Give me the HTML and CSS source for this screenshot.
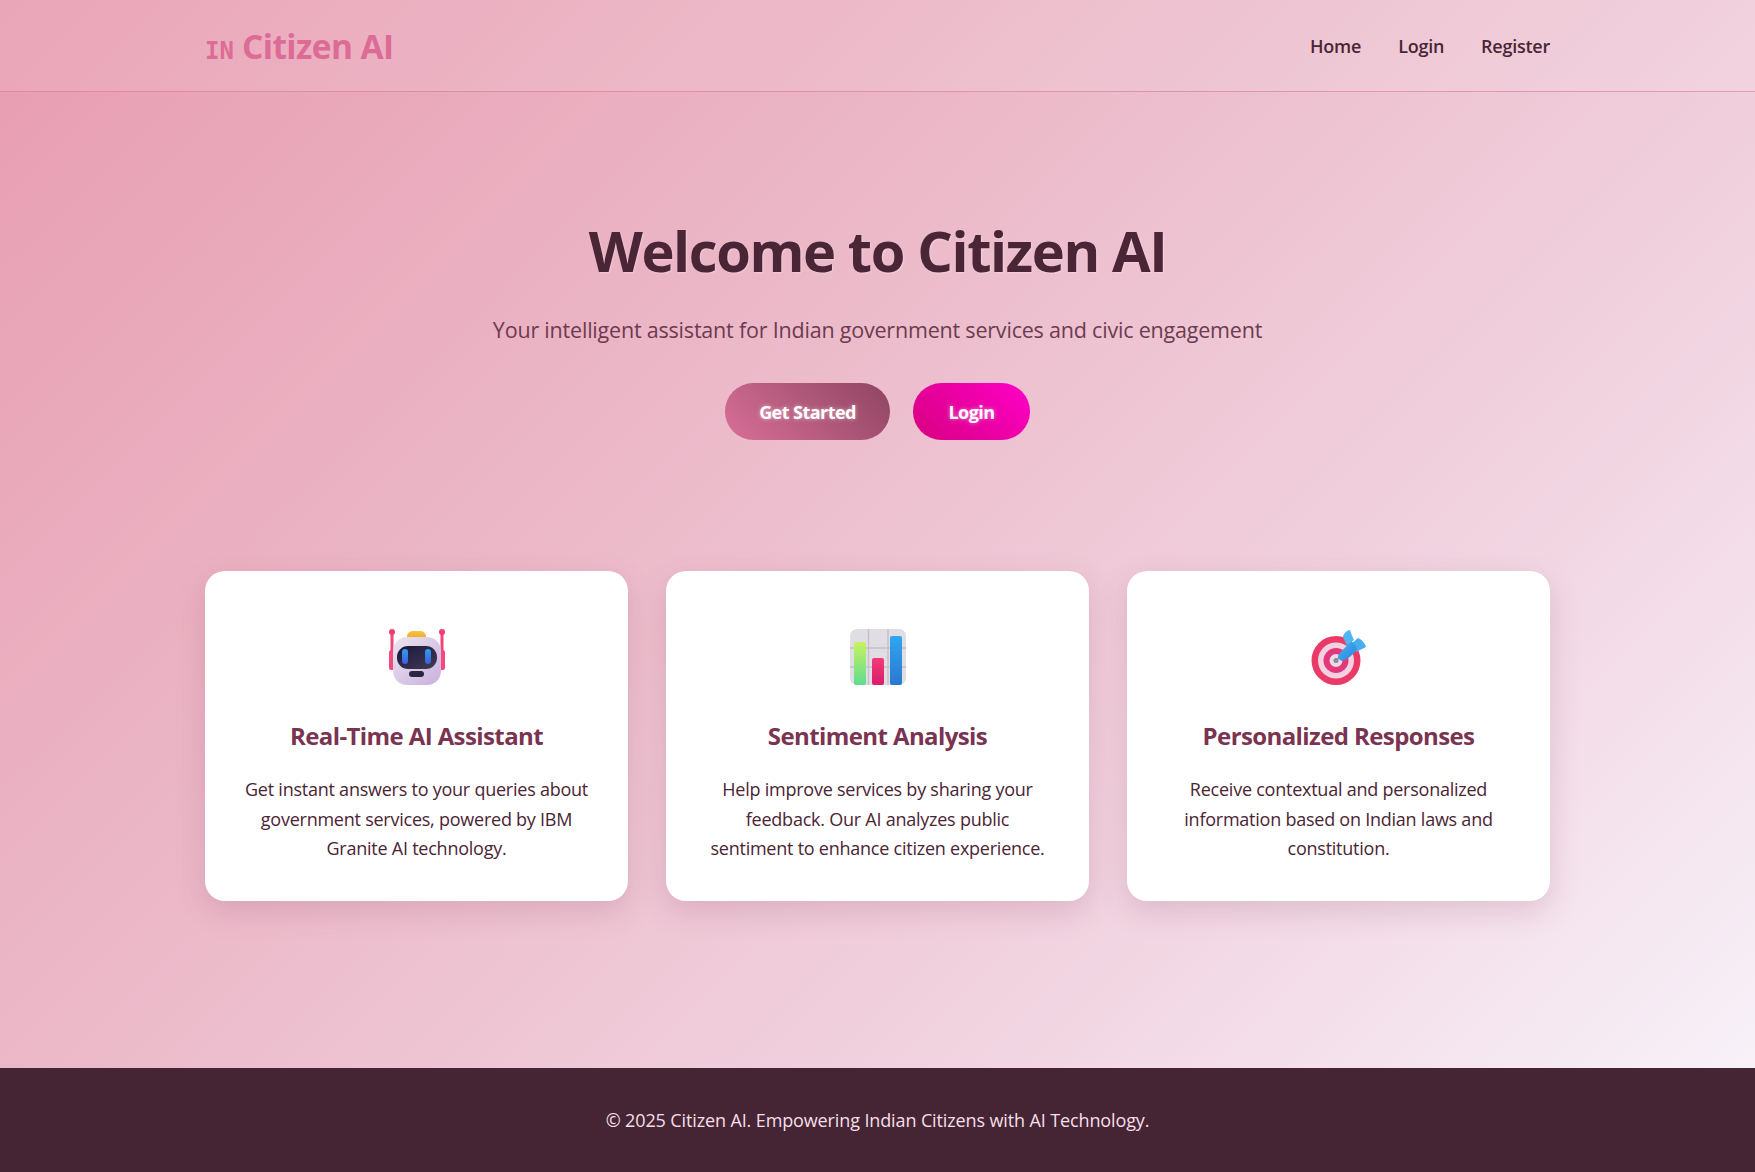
FILE: index.html
```html
<!DOCTYPE html>
<html lang="en">
<head>
<meta charset="utf-8">
<title>Citizen AI</title>
<link rel="stylesheet" href="styles.css">
</head>
<body>
<div class="page">
  <header class="topbar">
    <div class="wrap topbar-inner">
      <a class="logo"><span class="flag">IN</span> Citizen AI</a>
      <nav class="nav"><a>Home</a><a>Login</a><a>Register</a></nav>
    </div>
  </header>
  <main class="main">
    <section class="hero">
      <h1>Welcome to Citizen AI</h1>
      <p class="lead">Your intelligent assistant for Indian government services and civic engagement</p>
      <div class="actions">
        <a class="btn btn-rose">Get Started</a>
        <a class="btn btn-magenta">Login</a>
      </div>
    </section>
    <section class="wrap cards">
      <article class="card">
        <svg class="icon" viewBox="0 0 56 56">
          <defs>
            <linearGradient id="rb" x1="0" y1="0" x2="1" y2="1"><stop offset="0" stop-color="#ece6ef"/><stop offset="1" stop-color="#c9afdf"/></linearGradient>
            <linearGradient id="rs" x1="0" y1="0" x2="1" y2="1"><stop offset="0" stop-color="#17183a"/><stop offset="1" stop-color="#453a55"/></linearGradient>
            <linearGradient id="re" x1="0" y1="0" x2="0" y2="1"><stop offset="0" stop-color="#2f9df0"/><stop offset="1" stop-color="#3a5fd8"/></linearGradient>
            <linearGradient id="rh" x1="0" y1="0" x2="0" y2="1"><stop offset="0" stop-color="#f7c63e"/><stop offset="1" stop-color="#eea22a"/></linearGradient>
          </defs>
          <rect x="1.500" y="3" width="3" height="20" fill="#f0457a"/><rect x="51.500" y="3" width="3" height="20" fill="#f0457a"/>
          <circle cx="3" cy="3" r="3" fill="#ee3f72"/><circle cx="53" cy="3" r="3" fill="#ee3f72"/>
          <rect x="0" y="21" width="6" height="20" rx="2.500" fill="#f6477f"/><rect x="50" y="21" width="6" height="20" rx="2.500" fill="#f6477f"/>
          <path d="M18 8c0-4 3-6 6-6h7c3 0 6 2 6 6v3H18z" fill="url(#rh)"/>
          <rect x="4" y="8" width="48" height="48" rx="14" fill="url(#rb)"/>
          <rect x="8" y="17" width="40" height="23" rx="11" fill="url(#rs)"/>
          <rect x="13" y="20" width="6" height="15" rx="3" fill="url(#re)"/><rect x="36" y="20" width="6" height="15" rx="3" fill="url(#re)"/>
          <rect x="20" y="42" width="15" height="6" rx="3" fill="#2a2540"/>
        </svg>
        <h3>Real-Time AI Assistant</h3>
        <p>Get instant answers to your queries about government services, powered by IBM Granite AI technology.</p>
      </article>
      <article class="card">
        <svg class="icon" viewBox="0 0 56 56">
          <defs>
            <linearGradient id="bg" x1="0" y1="0" x2="0" y2="1"><stop offset="0" stop-color="#c8f25f"/><stop offset="1" stop-color="#60dc90"/></linearGradient>
            <linearGradient id="bp" x1="0" y1="0" x2="0" y2="1"><stop offset="0" stop-color="#f43a78"/><stop offset="1" stop-color="#d81e6b"/></linearGradient>
            <linearGradient id="bb" x1="0" y1="0" x2="0" y2="1"><stop offset="0" stop-color="#30a6f0"/><stop offset="1" stop-color="#2a78cf"/></linearGradient>
          </defs>
          <rect x="0" y="0" width="56" height="56" rx="7" fill="#e0dde4"/>
          <path d="M18.500 0v56M38 0v56M0 19h56M0 38h56" stroke="#c4c0c8" stroke-width="1.400"/>
          <rect x="4" y="13" width="12" height="43" rx="2" fill="url(#bg)"/>
          <rect x="22" y="29" width="12" height="27" rx="2" fill="url(#bp)"/>
          <rect x="40" y="7" width="12" height="49" rx="2" fill="url(#bb)"/>
        </svg>
        <h3>Sentiment Analysis</h3>
        <p>Help improve services by sharing your feedback. Our AI analyzes public sentiment to enhance citizen experience.</p>
      </article>
      <article class="card">
        <svg class="icon" viewBox="0 0 56 56">
          <defs>
            <linearGradient id="tb" x1="0" y1="0" x2="1" y2="1"><stop offset="0" stop-color="#3fb0f2"/><stop offset="1" stop-color="#2f86dc"/></linearGradient>
          </defs>
          <circle cx="25" cy="31.500" r="24.500" fill="#ea3a68"/>
          <circle cx="25" cy="31.500" r="18" fill="#f2d2e0"/>
          <circle cx="25" cy="31.500" r="12.500" fill="#e2387a"/>
          <circle cx="25" cy="31.500" r="6.500" fill="#ecdbe6"/>
          <circle cx="25" cy="31.500" r="2.500" fill="#8e8a94"/>
          <path d="M25 31.500L35 22" stroke="#7d8fae" stroke-width="1.400"/>
          <path d="M36 17L32 8c0-3 4-7 7-7 1 3 3 8 4 10z" fill="#4fb6f4"/>
          <path d="M40 15L47 9c3 1 7 5 8 9l-8 4-5 1z" fill="#46aef0"/>
          <path d="M27 27c3-5 9-11 14-14 3 2 4 4 5 7-3 5-9 10-15 12-3-1-4-3-4-5z" fill="url(#tb)"/>
        </svg>
        <h3>Personalized Responses</h3>
        <p>Receive contextual and personalized information based on Indian laws and constitution.</p>
      </article>
    </section>
  </main>
  <footer class="footer">© 2025 Citizen AI. Empowering Indian Citizens with AI Technology.</footer>
</div>
</body>
</html>
```
FILE: styles.css
```css
* { box-sizing: border-box; }
html, body { margin: 0; height: 100%; }
body {
  font-family: "Open Sans", "Noto Sans", "Liberation Sans", sans-serif;
  color: #4a2535;
  background: #fff;
}
.page {
  min-height: 1172px;
  display: flex;
  flex-direction: column;
  background: linear-gradient(135deg, #e89cb1 0%, #ebb6c6 35%, #f1d2df 70%, #f7f1f8 100%);
  background-size: 100% 1068px;
  background-repeat: no-repeat;
}
.wrap { width: 1345px; margin: 0 auto; }
.topbar {
  height: 92px;
  background: rgba(255, 255, 255, 0.1);
  border-bottom: 1px solid rgba(214, 110, 140, 0.55);
}
.topbar-inner {
  height: 100%;
  display: flex;
  align-items: center;
  justify-content: space-between;
}
.logo {
  font-size: 33.500px;
  font-weight: 700;
  color: #dc6c96;
  letter-spacing: -0.6px;
}
.flag { font-size: 24px; font-family: "DejaVu Sans Mono", monospace; letter-spacing: 0; }
.nav { display: flex; gap: 37px; }
.nav a { font-size: 18px; font-weight: 600; color: #4a2535; letter-spacing: -0.25px; }
.main { flex: 1; }
.hero { text-align: center; padding-top: 123px; }
.hero h1 {
  margin: 0;
  font-size: 56px;
  line-height: 70px;
  font-weight: 700;
  color: #4a2535;
  letter-spacing: -1.4px;
  text-shadow: 1px 1px 2px rgba(255, 255, 255, 0.3);
}
.lead {
  margin: 30px 0 0;
  font-size: 21.500px;
  line-height: 30px;
  font-weight: 400;
  color: #6d3b50;
  letter-spacing: -0.2px;
}
.actions { display: flex; justify-content: center; gap: 23px; margin-top: 38px; }
.btn {
  height: 57px;
  line-height: 58px;
  border-radius: 29px;
  font-size: 18px;
  font-weight: 700;
  color: #fff;
  text-align: center;
  letter-spacing: -0.55px;
  text-shadow: 0 0 4px rgba(255, 255, 255, 0.5);
}
.btn-rose { width: 165px; background: linear-gradient(45deg, #d96f98, #8e4560); }
.btn-magenta { width: 117px; background: linear-gradient(45deg, #d6007f, #ff00c8); }
.cards {
  display: grid;
  grid-template-columns: repeat(3, 423px);
  gap: 38px;
  margin-top: 131px;
}
.card {
  height: 330px;
  background: #fff;
  border-radius: 20px;
  box-shadow: 0 10px 30px rgba(140, 70, 100, 0.2);
  padding: 58px 38px 0;
  text-align: center;
}
.icon { display: block; width: 56px; height: 56px; margin: 0 auto; filter: blur(0.3px); overflow: visible; }
.card h3 {
  margin: 34px 0 0;
  font-size: 24px;
  line-height: 34px;
  font-weight: 700;
  color: #7a3350;
  letter-spacing: -0.6px;
}
.card p {
  margin: 22px 0 0;
  font-size: 18px;
  line-height: 29.600px;
  font-weight: 400;
  color: #4a2535;
  letter-spacing: -0.24px;
}
.footer {
  height: 104px;
  background: #452534;
  color: #f6dfe8;
  text-align: center;
  font-size: 18px;
  line-height: 104px;
  letter-spacing: -0.12px;
}
```
